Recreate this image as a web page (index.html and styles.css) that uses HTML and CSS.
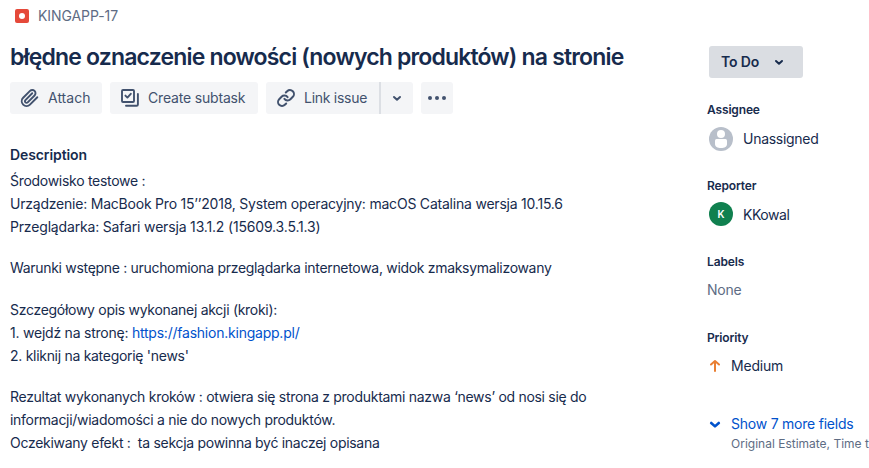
FILE: index.html
```html
<!DOCTYPE html>
<html lang="pl">
<head>
<meta charset="utf-8">
<title>KINGAPP-17</title>
<link rel="stylesheet" href="styles.css">
</head>
<body>
<div class="issue">
  <main class="main">
    <div class="breadcrumb">
      <svg width="14" height="14" viewBox="0 0 14 14"><rect width="14" height="14" rx="2" fill="#e5493a"/><circle cx="7" cy="7" r="3" fill="#fff"/></svg>
      <span class="key">KINGAPP-17</span>
    </div>
    <h1 class="title">błędne oznaczenie nowości (nowych produktów) na stronie</h1>
    <div class="toolbar">
      <button class="btn attach">
        <svg width="20" height="20" viewBox="-0.2 -0.5 25 25" fill="none" stroke="#42526e" stroke-width="2.4" stroke-linecap="round" stroke-linejoin="round"><path d="m21.440 11.050-9.190 9.190a6 6 0 0 1-8.490-8.490l8.570-8.570A4 4 0 1 1 18 8.840l-8.590 8.570a2 2 0 0 1-2.830-2.830l8.490-8.480"/></svg>
        <span>Attach</span>
      </button>
      <button class="btn subtask">
        <svg width="20" height="20" viewBox="0 0 20 20" fill="none" stroke="#42526e" stroke-width="1.9" stroke-linecap="round" stroke-linejoin="round"><rect x="2" y="2" width="12" height="12" rx="1"/><path d="m5.400 7.600 2 2 3.400-3.800M17.900 6v10.500a1.300 1.300 0 0 1-1.300 1.300H6"/></svg>
        <span>Create subtask</span>
      </button>
      <div class="split">
        <button class="btn link">
          <svg width="20" height="20" viewBox="-0.5 -0.5 25 25" fill="none" stroke="#42526e" stroke-width="2.5" stroke-linecap="round"><path d="M10 13a5 5 0 0 0 7.540.540l3-3a5 5 0 0 0-7.070-7.070l-1.720 1.710M14 11a5 5 0 0 0-7.540-.540l-3 3a5 5 0 0 0 7.070 7.070l1.710-1.710"/></svg>
          <span>Link issue</span>
        </button>
        <button class="btn drop"><svg width="10" height="8" viewBox="0 0 10 8" fill="none" stroke="#42526e" stroke-width="2" stroke-linecap="round" stroke-linejoin="round"><path d="m2 3 3 2.800L8 3"/></svg></button>
      </div>
      <button class="btn more"><svg width="20" height="6" viewBox="0 0 20 6" fill="#42526e"><circle cx="3" cy="3" r="2"/><circle cx="10" cy="3" r="2"/><circle cx="17" cy="3" r="2"/></svg></button>
    </div>
    <h2 class="heading"><span>Description</span></h2>
    <div class="description">
      <p>Środowisko testowe :<br><span class="device">Urządzenie: MacBook Pro 15’’2018, System operacyjny: macOS Catalina wersja 10.15.6</span><br><span class="browser">Przeglądarka: Safari wersja 13.1.2 (15609.3.5.1.3)</span></p>
      <p class="precondition">Warunki wstępne : uruchomiona przeglądarka internetowa, widok zmaksymalizowany</p>
      <p class="steps">Szczegółowy opis wykonanej akcji (kroki):<br><span class="step-url">1. wejdź na stronę: <a href="#">https://fashion.kingapp.pl/</a></span><br>2. kliknij na kategorię 'news'</p>
      <p>Rezultat wykonanych kroków : otwiera się strona z produktami nazwa ‘news’ od nosi się do<br>informacji/wiadomości a nie do nowych produktów.<br>Oczekiwany efekt :&nbsp; ta sekcja powinna być inaczej opisana</p>
    </div>
  </main>
  <aside class="side">
    <button class="status"><span>To Do</span><svg width="10" height="8" viewBox="0 0 10 8" fill="none" stroke="#172b4d" stroke-width="2" stroke-linecap="round" stroke-linejoin="round"><path d="m2 3 3 2.800L8 3"/></svg></button>
    <section class="field">
      <h3>Assignee</h3>
      <div class="value person"><svg width="24" height="24" viewBox="0 0 24 24"><circle cx="12" cy="12" r="12" fill="#b8bfca"/><circle cx="12" cy="7" r="4" fill="#fff"/><path d="M6 13.500a1.500 1.500 0 0 1 1.500-1.500h9a1.500 1.500 0 0 1 1.500 1.500V17c0 2.700-2.400 4-6 4s-6-1.300-6-4z" fill="#fff"/></svg><span class="assignee">Unassigned</span></div>
    </section>
    <section class="field">
      <h3>Reporter</h3>
      <div class="value person reporter-row"><span class="avatar">K</span><span class="reporter">KKowal</span></div>
    </section>
    <section class="field">
      <h3>Labels</h3>
      <div class="value none">None</div>
    </section>
    <section class="field">
      <h3>Priority</h3>
      <div class="value priority"><svg width="16" height="16" viewBox="0 0 16 16" fill="none" stroke="#e97f33" stroke-width="2" stroke-linecap="round" stroke-linejoin="round"><path d="M8 13V3M4 6.500 8 3l4 3.500"/></svg><span>Medium</span></div>
    </section>
    <div class="expander">
      <svg width="16" height="16" viewBox="0 0 16 16" fill="none" stroke="#0052cc" stroke-width="2.6" stroke-linecap="round" stroke-linejoin="round"><path d="m4.200 7 3.800 3.400L11.800 7"/></svg>
      <div class="expander-text"><a href="#">Show 7 more fields</a><span class="sub">Original Estimate, Time t</span></div>
    </div>
  </aside>
</div>
</body>
</html>
```
FILE: styles.css
```css
* { box-sizing: border-box; }
body { margin: 0; background: #fff; color: #172b4d; font: 14px/20px Inter, "Noto Sans", sans-serif; overflow: hidden; }
h1, h2, h3, p { margin: 0; }
a { color: #0052cc; text-decoration: none; }
svg { display: block; flex: none; }
button { font: inherit; color: inherit; border: 0; margin: 0; padding: 0; }
.issue { display: grid; grid-template-columns: 707px 162px; height: 468px; overflow: hidden; white-space: nowrap; }
.main { padding: 6px 0 0 10px; }
.breadcrumb { display: flex; align-items: center; gap: 9px; height: 20px; padding-left: 5px; color: #5e6c84; letter-spacing: -0.08px; }
.title { margin-top: 17px; font-size: 23px; line-height: 28px; font-weight: 600; letter-spacing: -0.83px; }
.toolbar { display: flex; gap: 8px; margin-top: 11px; }
.btn { display: flex; align-items: center; height: 32px; background: #f4f5f7; color: #42526e; border-radius: 3px; gap: 8px; padding-left: 10px; }
.attach { width: 92px; }
.subtask { width: 148px; letter-spacing: -0.18px; }
.split { display: flex; }
.link { width: 113px; border-radius: 3px 0 0 3px; letter-spacing: -0.28px; }
.drop { width: 34px; padding: 0; justify-content: center; border-left: 2px solid #dcdfe4; border-radius: 0 3px 3px 0; }
.more { width: 32px; padding: 0; justify-content: center; }
.heading { margin-top: 31px; font-size: 14px; line-height: 20px; font-weight: 600; letter-spacing: -0.1px; }
.description { margin-top: 4px; line-height: 23px; letter-spacing: -0.29px; }
.description p + p { margin-top: 18px; }
.description .steps.steps { margin-top: 19px; }
.device { letter-spacing: -0.215px; }
.browser { letter-spacing: -0.17px; }
.precondition { letter-spacing: -0.31px; }
.step-url { letter-spacing: -0.23px; }
.side { padding-top: 46px; }
.status { display: flex; align-items: center; gap: 15px; width: 94px; height: 32px; margin: 0 0 22px 2px; padding-left: 12px; background: #dadde2; border-radius: 3px; font-weight: 600; letter-spacing: -0.15px; }
.field { height: 76px; }
.field h3 { font-size: 12px; line-height: 20px; font-weight: 600; letter-spacing: -0.15px; }
.value { display: flex; align-items: center; height: 24px; margin-top: 7px; }
.person { gap: 10px; padding-left: 2px; }
.assignee { letter-spacing: -0.28px; }
.reporter { padding-top: 2px; line-height: 22px; letter-spacing: -0.45px; }
.reporter-row { margin-top: 6px; }
.avatar { display: flex; align-items: center; justify-content: center; width: 24px; height: 24px; border-radius: 50%; background: #10804f; color: #fff; font-size: 10px; font-weight: 600; }
.none { margin-top: 6px; color: #5e6c84; letter-spacing: -0.2px; }
.priority { gap: 8px; margin-top: 6px; letter-spacing: -0.2px; }
.expander { display: flex; gap: 8px; margin-top: 10px; }
.expander svg { margin-top: 2px; }
.expander-text { display: flex; flex-direction: column; letter-spacing: -0.23px; }
.sub { color: #5e6c84; font-size: 12px; line-height: 19px; letter-spacing: 0; }
```
